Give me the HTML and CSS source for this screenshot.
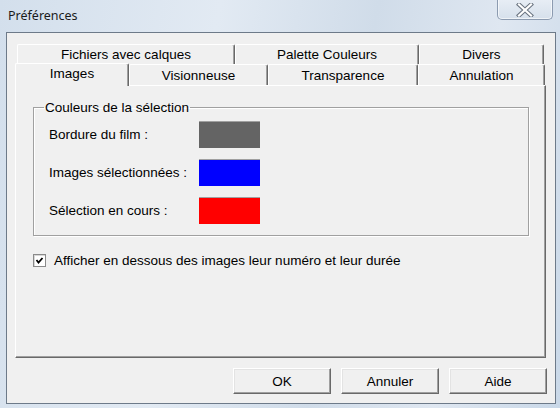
FILE: index.html
```html
<!DOCTYPE html>
<html lang="fr">
<head>
<meta charset="utf-8">
<title>Préférences</title>
<link rel="stylesheet" href="styles.css">
</head>
<body>
<div class="window">
  <div class="titlebar">
    <span class="title">Préférences</span>
    <span class="close">
      <svg width="18" height="14" viewBox="0 0 18 14">
        <path d="M3 1.5 L15 12.5 M15 1.5 L3 12.5" stroke="#6a7480" stroke-width="4.2" stroke-linecap="square"/>
        <path d="M3 1.5 L15 12.5 M15 1.5 L3 12.5" stroke="#ffffff" stroke-width="2.2" stroke-linecap="square"/>
      </svg>
    </span>
  </div>
  <div class="client">
    <div class="tabs">
      <div class="tabrow back">
        <div class="tab w1">Fichiers avec calques</div>
        <div class="tab w2">Palette Couleurs</div>
        <div class="tab w3">Divers</div>
      </div>
      <div class="tabrow front">
        <div class="tab sel w4">Images</div>
        <div class="tab w5">Visionneuse</div>
        <div class="tab w6">Transparence</div>
        <div class="tab w7">Annulation</div>
      </div>
    </div>
    <div class="panel">
      <fieldset class="group">
        <legend>Couleurs de la sélection</legend>
        <div class="rows">
          <span class="label">Bordure du film :</span><span class="swatch gray"></span>
          <span class="label">Images sélectionnées :</span><span class="swatch blue"></span>
          <span class="label">Sélection en cours :</span><span class="swatch red"></span>
        </div>
      </fieldset>
      <div class="check">
        <span class="box">
          <svg width="11" height="11" viewBox="0 0 11 11"><polyline points="2.5,5 4.5,7.5 8.5,3" fill="none" stroke="#000" stroke-width="1.8"/></svg>
        </span>
        <span>Afficher en dessous des images leur numéro et leur durée</span>
      </div>
    </div>
    <div class="buttons">
      <button class="btn">OK</button>
      <button class="btn">Annuler</button>
      <button class="btn">Aide</button>
    </div>
  </div>
</div>
</body>
</html>
```

FILE: styles.css
```css
* { box-sizing: border-box; }
html, body { margin: 0; padding: 0; }
body {
  width: 560px;
  height: 408px;
  overflow: hidden;
  font-family: "Liberation Sans", Arial, sans-serif;
  font-size: 13.5px;
  color: #000;
}
.window {
  width: 560px;
  height: 408px;
  display: flex;
  flex-direction: column;
  background: linear-gradient(100deg, #d3dfec 0%, #e2eaf3 35%, #d0dce9 60%, #dfe7f1 80%, #c9d8e8 100%);
  padding: 0 4px 4px 6px;
}
.titlebar {
  height: 32px;
  display: flex;
  justify-content: space-between;
  align-items: flex-start;
}
.title {
  font-family: "Noto Sans", "Open Sans", sans-serif;
  font-size: 12.5px;
  color: #1a1a1a;
  margin: 7px 0 0 2px;
}
.close {
  width: 56px;
  height: 21px;
  margin-right: 3px;
  margin-top: -1px;
  border: 1px solid #8c9bb0;
  border-top: none;
  border-radius: 0 0 5px 5px;
  background: linear-gradient(#e8eef5, #d6e0eb);
  box-shadow: inset 0 0 0 1px rgba(255,255,255,0.6);
  display: flex;
  align-items: center;
  justify-content: center;
  padding-top: 1px;
}
.client {
  flex: 1;
  background: #f0f0f0;
  border: 1px solid #6d7a89;
  padding: 11px 8px 8px 8px;
  display: flex;
  flex-direction: column;
}
.tabs { display: flex; flex-direction: column; }
.tabrow { display: flex; }
.tabrow.back { height: 20px; padding-left: 2px; }
.tabrow.front { height: 21px; align-items: flex-end; }
.tab {
  background: #f0f0f0;
  border-top: 1px solid #fff;
  border-left: 1px solid #fff;
  border-right: 1px solid #696969;
  box-shadow: inset -1px 0 #a0a0a0;
  border-radius: 2px 2px 0 0;
  text-align: center;
  line-height: 19px;
  height: 100%;
  white-space: nowrap;
}
.tabrow.front .tab { height: 21px; line-height: 22px; }
.tabrow.front .tab.sel {
  height: 23px;
  margin-bottom: -1px;
  margin-top: -2px;
  line-height: 19px;
  position: relative;
  z-index: 1;
}
.w1 { width: 218px; }
.w2 { width: 184px; }
.w3 { width: 125px; }
.w4 { width: 114px; }
.w5 { width: 139px; }
.w6 { width: 150px; }
.w7 { width: 127px; }
.panel {
  width: 531px;
  height: 273px;
  border-top: 1px solid #fff;
  border-left: 1px solid #fff;
  border-right: 1px solid #696969;
  border-bottom: 1px solid #696969;
  box-shadow: inset -1px -1px #a0a0a0;
  padding: 14px 16px 0 17px;
}
.group {
  margin: 0;
  border: 1px solid #a0a0a0;
  box-shadow: 1px 1px 0 #fff, inset 1px 1px 0 #fff;
  padding: 6px 0 11px 0;
}
.group legend {
  margin-left: 10px;
  padding: 0 1px;
  line-height: 15px;
}
.rows {
  display: grid;
  grid-template-columns: 150px 61px;
  row-gap: 11px;
  align-items: center;
  padding-left: 15px;
}
.swatch {
  height: 27px;
  border-top: 1px solid #a0a0a0;
}
.gray { background: #646464; }
.blue { background: #0000ff; }
.red { background: #ff0000; }
.check {
  display: flex;
  align-items: center;
  gap: 8px;
  margin-top: 17px;
}
.box {
  width: 13px;
  height: 13px;
  background: #fff;
  border: 1px solid #8a8a8a;
  box-shadow: inset 1px 1px #d8d8d8;
  display: flex;
  align-items: center;
  justify-content: center;
}
.buttons {
  display: flex;
  justify-content: flex-end;
  gap: 10px;
  margin-top: 10px;
}
.btn {
  width: 98px;
  height: 26px;
  font-family: "Liberation Sans", Arial, sans-serif;
  font-size: 13.5px;
  color: #000;
  background: #f0f0f0;
  border: 1px solid;
  border-color: #fff #696969 #696969 #fff;
  box-shadow: inset -1px -1px #a0a0a0, inset 1px 1px #e3e3e3;
  padding: 0;
}
```
